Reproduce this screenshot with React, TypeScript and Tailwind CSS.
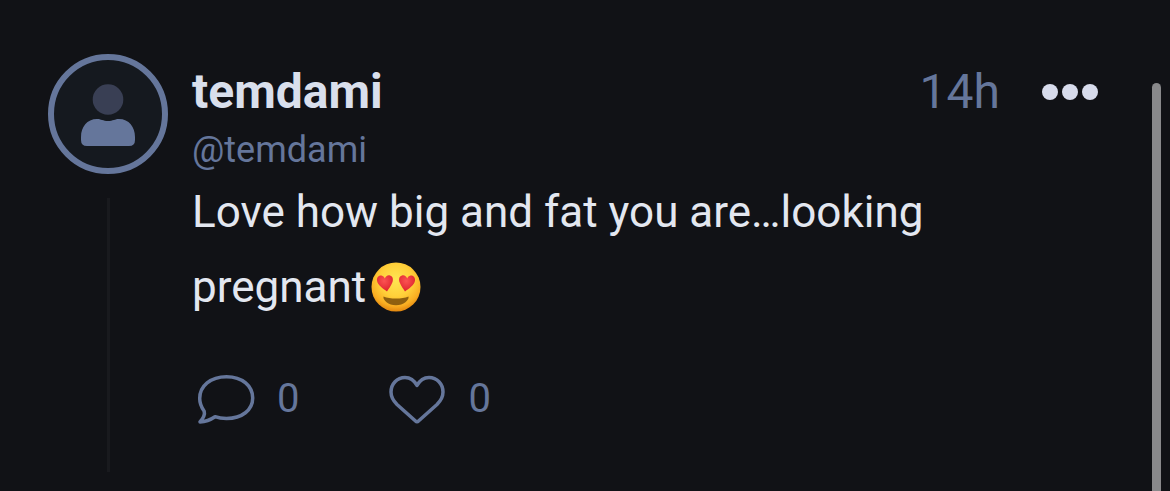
import type { ReactNode } from "react";

interface Post {
  name: string;
  handle: string;
  time: string;
  lines: string[];
  comments: number;
  likes: number;
}

const post: Post = {
  name: "temdami",
  handle: "@temdami",
  time: "14h",
  lines: ["Love how big and fat you are…looking", "pregnant"],
  comments: 0,
  likes: 0,
};

function Avatar() {
  return (
    <div className="flex size-[120px] shrink-0 items-center justify-center rounded-full border-6 border-[#65769b] bg-[#15191f]">
      <svg viewBox="0 0 108 108" className="size-full" aria-hidden="true">
        <circle cx="54" cy="39.500" r="15.300" fill="#393f54" />
        <path
          d="M27 80V77C27 67 33 59 43 59C47 59 49 61 54 61S61 59 65 59C75 59 81 67 81 77V80Q81 86 75 86H33Q27 86 27 80Z"
          fill="#65769b"
        />
      </svg>
    </div>
  );
}

function HeartEyes() {
  return (
    <svg
      viewBox="0 0 50 50"
      className="ml-[5px] inline-block size-[50px] align-[-10px]"
      role="img"
      aria-label="Smiling face with heart eyes"
    >
      <defs>
        <radialGradient id="face" cx="50%" cy="36%" r="66%">
          <stop offset="0" stopColor="#ffe552" />
          <stop offset="0.500" stopColor="#ffd03a" />
          <stop offset="0.800" stopColor="#f9ae22" />
          <stop offset="1" stopColor="#df800c" />
        </radialGradient>
        <radialGradient id="heart" cx="45%" cy="35%" r="70%">
          <stop offset="0" stopColor="#fb5352" />
          <stop offset="1" stopColor="#dc1f2a" />
        </radialGradient>
      </defs>
      <circle cx="25" cy="25" r="24.500" fill="url(#face)" />
      <path
        d="M16 29.500C12 26.500 6.500 23 6 18.500C5.600 15 8.500 13 11 13.700C12.500 14.100 13.400 15.300 13.800 16.500C14.600 14.500 16.500 12.700 19 13.400C22 14.300 22.500 17.500 21.300 20.500C20 24 17.500 27 16 29.500Z"
        fill="url(#heart)"
      />
      <path
        d="M34 29.500C38 26.500 43.500 23 44 18.500C44.400 15 41.500 13 39 13.700C37.500 14.100 36.600 15.300 36.200 16.500C35.400 14.500 33.500 12.700 31 13.400C28 14.300 27.500 17.500 28.700 20.500C30 24 32.500 27 34 29.500Z"
        fill="url(#heart)"
      />
      <path
        d="M12.500 34.500C16 36 20 36.500 25 36.500S34 36 37.500 34.500C38.500 38 32.500 43.300 25 43.300S11.500 38 12.500 34.500Z"
        fill="#8f600f"
      />
    </svg>
  );
}

function CommentIcon() {
  return (
    <svg viewBox="0 0 60 52" className="h-[52px] w-[60px]" aria-hidden="true">
      <path
        d="M4 49C7 45.500 9.300 42 8.200 38.200C5.500 34.500 3.700 30.500 3.700 25.500C3.700 13 14.500 3.700 30.500 3.700S56.700 13 56.700 25S46 45.500 30.500 45.500C26.500 45.500 22.500 45 19 43.700C14.500 46.800 10 48.700 4 49Z"
        fill="none"
        stroke="currentColor"
        strokeWidth="3.500"
        strokeLinejoin="round"
      />
    </svg>
  );
}

function HeartIcon() {
  return (
    <svg viewBox="0 0 60 52" className="h-[52px] w-[60px]" aria-hidden="true">
      <path
        d="M30 12.500C27 7 22.500 4.500 18 4.500C10 4.500 4 11 4 19C4 24 6.500 28 10 31.500L28.500 48Q30 49.500 31.500 48L50 31.500C53.500 28 56 24 56 19C56 11 50 4.500 42 4.500C37.500 4.500 33 7 30 12.500Z"
        fill="none"
        stroke="currentColor"
        strokeWidth="3.500"
        strokeLinejoin="round"
      />
    </svg>
  );
}

function ActionButton({
  label,
  count,
  children,
}: {
  label: string;
  count: number;
  children: ReactNode;
}) {
  return (
    <button
      type="button"
      aria-label={label}
      className="flex cursor-pointer items-center gap-[21px] text-[40px] leading-[52px]"
    >
      {children}
      <span>{count}</span>
    </button>
  );
}

export default function App() {
  return (
    <div className="flex min-h-screen bg-[#111216] pr-[9px] font-[Roboto,sans-serif] text-[#65769b]">
      <article className="flex min-w-0 flex-1 gap-6 pt-[54px] pr-[54px] pb-[19px] pl-12">
        {/* Avatar and thread line */}
        <div className="flex flex-col items-center gap-6">
          <Avatar />
          <div className="w-[3px] flex-1 bg-[#191a1e]" />
        </div>

        <div className="min-w-0 flex-1 pt-[10px]">
          <header className="flex items-start justify-between">
            <div>
              <h2 className="text-5xl leading-[56px] font-bold text-[#d9dfec]">
                {post.name}
              </h2>
              <a href="#profile" className="mt-2 block text-4xl leading-[44px]">
                {post.handle}
              </a>
            </div>
            <div className="flex h-14 items-center gap-[42px]">
              <time className="text-5xl leading-[56px]">{post.time}</time>
              <button
                type="button"
                aria-label="More options"
                className="flex cursor-pointer gap-1"
              >
                <span className="size-4 rounded-full bg-[#d8dcec]" />
                <span className="size-4 rounded-full bg-[#d8dcec]" />
                <span className="size-4 rounded-full bg-[#d8dcec]" />
              </button>
            </div>
          </header>

          <p className="mt-[3px] text-[44px] leading-[75px] text-[#e3e7f0]">
            {post.lines[0]}
            <br />
            {post.lines[1]}
            <HeartEyes />
          </p>

          {/* Actions */}
          <div className="mt-12 ml-1 flex items-center gap-[88px]">
            <ActionButton label="Comment" count={post.comments}>
              <CommentIcon />
            </ActionButton>
            <ActionButton label="Like" count={post.likes}>
              <HeartIcon />
            </ActionButton>
          </div>
        </div>
      </article>

      {/* Scroll thumb */}
      <div className="mt-[83px] w-[9px] rounded-t-full bg-[#89898b]" />
    </div>
  );
}
